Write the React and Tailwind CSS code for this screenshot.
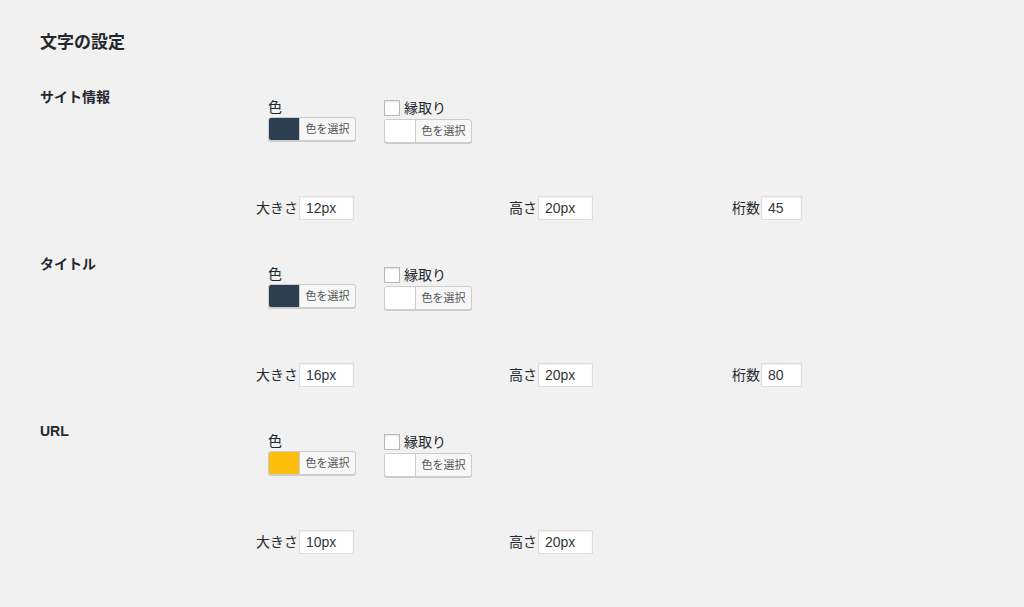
const font = { fontFamily: '"Liberation Sans", "Noto Sans CJK JP", sans-serif' };

const sections = [
  { name: "サイト情報", color: "bg-[#2d3e50]", size: "12px", height: "20px", digits: "45" },
  { name: "タイトル", color: "bg-[#2d3e50]", size: "16px", height: "20px", digits: "80" },
  { name: "URL", color: "bg-[#fcbd0c]", size: "10px", height: "20px", digits: null },
];

const ColorButton = ({ swatch }) => (
  <div className="flex h-[24px] w-[88px] rounded-[3px] border border-[#cccccc] bg-[#f7f7f7] shadow-[0_1px_0_#cccccc] overflow-hidden">
    <span className={`w-[30px] h-full ${swatch}`}></span>
    <span className="flex-1 flex items-center justify-center border-l border-[#cccccc] text-[11px] text-[#555555]">
      色を選択
    </span>
  </div>
);

const Field = ({ label, value, width }) => (
  <div className="flex items-center gap-[1px]">
    <span className="text-[14px] text-[#23282d]">{label}</span>
    <input
      readOnly
      value={value}
      className={`${width} h-[24px] px-[6px] bg-white border border-[#dddddd] shadow-[inset_0_1px_2px_rgba(0,0,0,0.07)] text-[14px] text-[#32373c] outline-none`}
    />
  </div>
);

const App = () => {
  return (
    <div className="w-[1024px] h-[607px] bg-[#f1f1f1] overflow-hidden pl-[40px]" style={font}>
      <h2 className="pt-[31px] text-[17px] leading-[24px] font-bold text-[#23282d]">文字の設定</h2>

      <div className="mt-[32px] flex flex-col">
        {sections.map((s) => (
          <div key={s.name} className="flex h-[167px]">
            <div className="w-[216px] text-[14px] leading-[20px] font-bold text-[#23282d]">{s.name}</div>
            <div className="pt-[10px] flex flex-col">
              {/* color pickers */}
              <div className="flex gap-[28px] pl-[12px]">
                <div className="flex flex-col">
                  <span className="text-[14px] leading-[20px] text-[#23282d]">色</span>
                  <ColorButton swatch={s.color} />
                </div>
                <div className="flex flex-col">
                  <label className="flex items-center gap-[4px] h-[22px]">
                    <span className="w-[16px] h-[16px] bg-white border border-[#b4b9be] shadow-[inset_0_1px_2px_rgba(0,0,0,0.1)]"></span>
                    <span className="text-[14px] text-[#23282d]">縁取り</span>
                  </label>
                  <ColorButton swatch="bg-white" />
                </div>
              </div>

              {/* size fields */}
              <div className="mt-[53px] flex">
                <div className="w-[253px]">
                  <Field label="大きさ" value={s.size} width="w-[55px]" />
                </div>
                <div className="w-[223px]">
                  <Field label="高さ" value={s.height} width="w-[55px]" />
                </div>
                {s.digits && <Field label="桁数" value={s.digits} width="w-[41px]" />}
              </div>
            </div>
          </div>
        ))}
      </div>
    </div>
  );
};

export default App;
